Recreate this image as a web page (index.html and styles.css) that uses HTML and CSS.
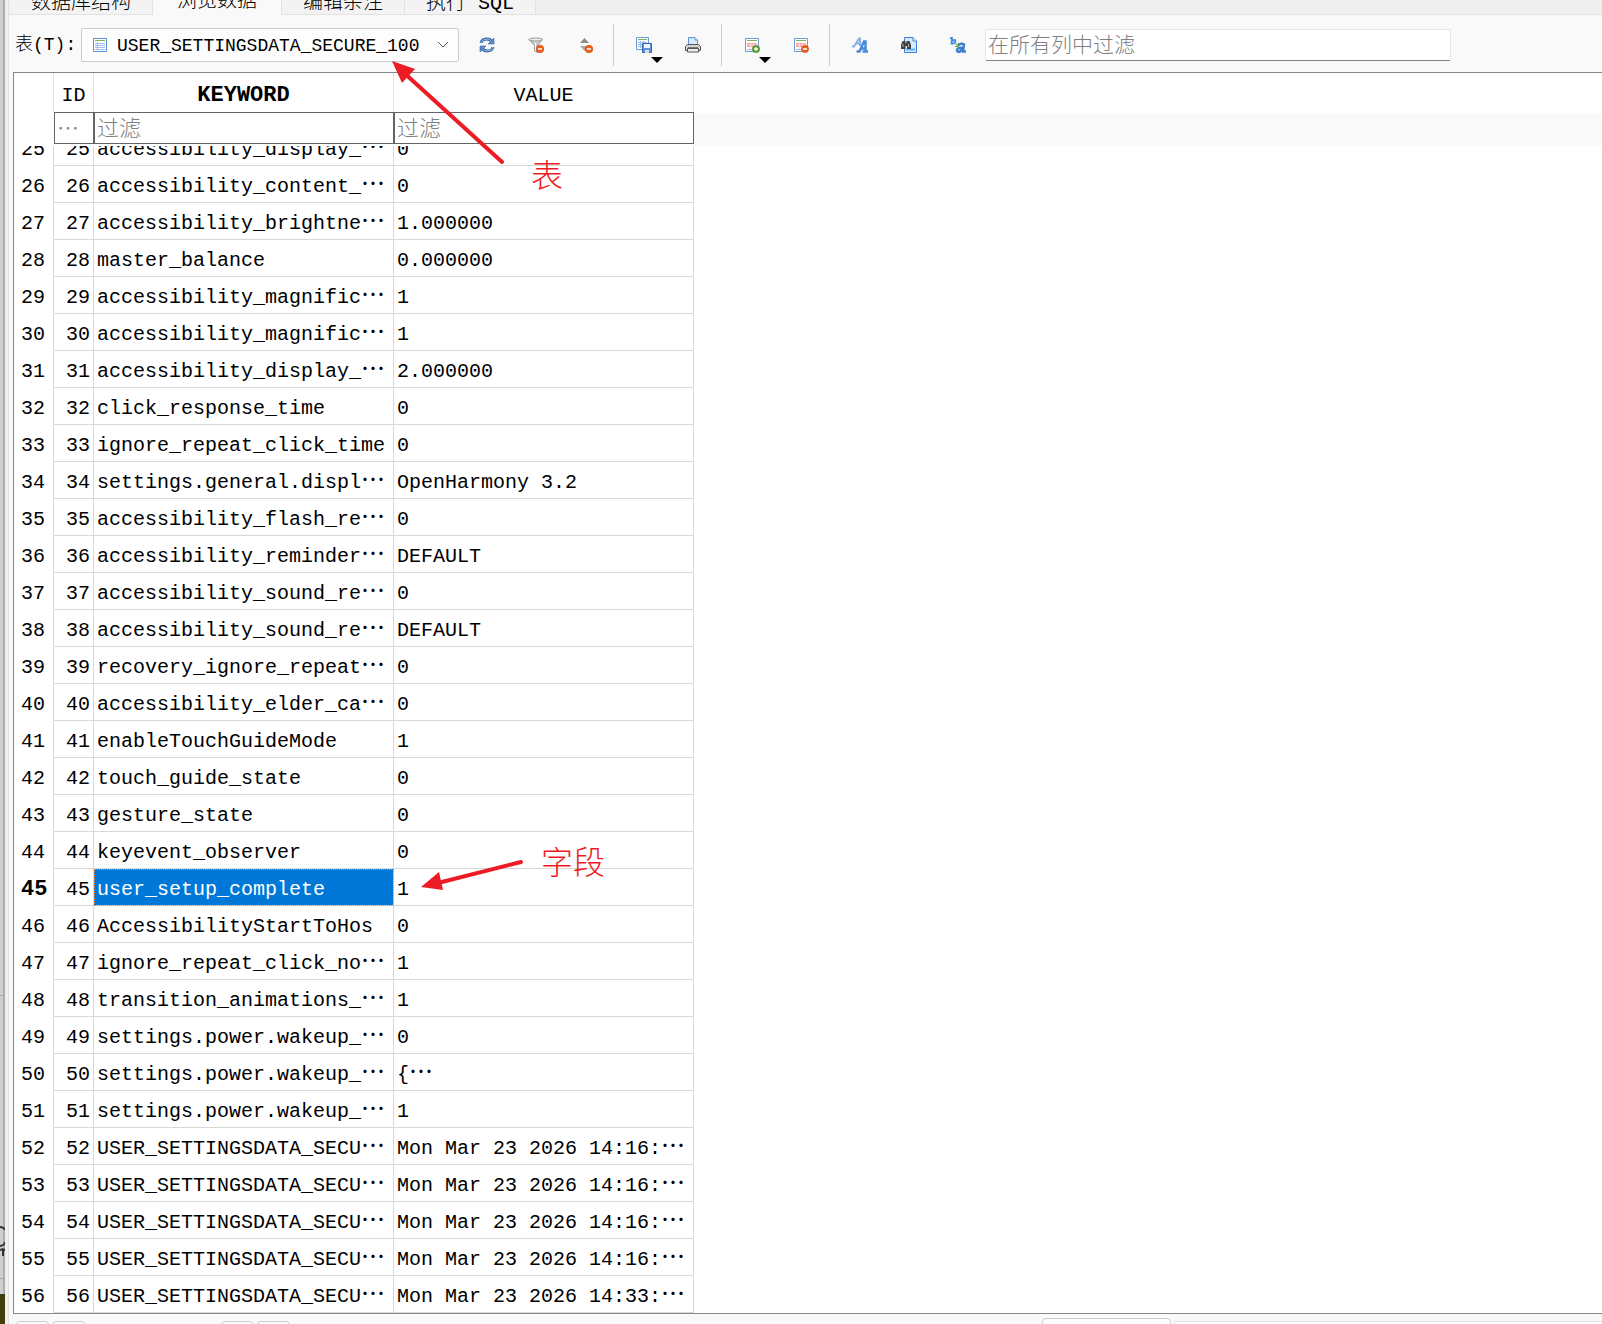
FILE: index.html
```html
<!doctype html>
<html lang="zh-CN">
  <head>
    <meta charset="utf-8">
    <meta name="viewport" content="width=device-width, initial-scale=1">
    <title>浏览数据</title>
    <link rel="stylesheet" href="styles.css">
  </head>
  <body>
    <div class="backdrop">
      <div class="backdrop-top"></div>
      <div class="backdrop-mid">
        <svg width="5" height="32" viewBox="0 0 5 32"><path d="M0 1Q4 1 5 4M0 20Q4 20 5 16M0 24Q4 22 5 25M3 24V30" fill="none" stroke="#333" stroke-width="2"/></svg>
      </div>
      <div class="backdrop-low"></div>
      <div class="backdrop-end"></div>
    </div>
    <main class="window">
      <nav class="tabs">
        <button type="button" class="tab">数据库结构</button>
        <button type="button" class="tab active">浏览数据</button>
        <button type="button" class="tab">编辑杂注</button>
        <button type="button" class="tab">执行 SQL</button>
      </nav>
      <div class="toolbar">
        <label class="table-label" for="table">表(T):</label>
        <div class="combo">
          <svg class="combo-icon" width="16" height="16" viewBox="0 0 16 16"><path d="M1.500 1.500h13v13h-13z" fill="#fff" stroke="#5b8fd6"/><path d="M3 3.500h10" stroke="#7fb558"/><path d="M3 6.500h10M3 8.500h10M3 10.500h10M3 12.500h10M5.500 5v8" stroke="#9bbcec"/></svg>
          <select id="table" class="combo-select">
            <option>USER_SETTINGSDATA_SECURE_100</option>
          </select>
          <svg class="combo-arrow" width="12" height="8" viewBox="0 0 12 8"><path d="M1 1l5 5 5-5" fill="none" stroke="#555"/></svg>
        </div>
        <button type="button" class="tool" aria-label="刷新">
          <svg width="16" height="16" viewBox="0 0 16 16"><path d="M2 6Q3 2 8 2q3 0 4.500 2.500" fill="none" stroke="#3465a4" stroke-width="3"/><path d="M2 6Q3 2 8 2q3 0 4.500 2.500" fill="none" stroke="#9fc0ea"/><path d="M15 1v6H9z" fill="#5d8ccb" stroke="#3465a4" stroke-width=".6"/><path d="M14 10q-1 4-6 4-3 0-4.500-2.500" fill="none" stroke="#3465a4" stroke-width="3"/><path d="M14 10q-1 4-6 4-3 0-4.500-2.500" fill="none" stroke="#9fc0ea"/><path d="M1 15V9h6z" fill="#5d8ccb" stroke="#3465a4" stroke-width=".6"/></svg>
        </button>
        <button type="button" class="tool" aria-label="清除筛选">
          <svg width="16" height="16" viewBox="0 0 16 16"><path d="M1 2.500l5.500 6V14l3 1.500v-7l5-6z" fill="#ccc" stroke="#999"/><ellipse cx="7.700" cy="2.500" rx="6.800" ry="1.500" fill="#eee" stroke="#999"/><path d="M7.500 6v8" stroke="#fff"/><circle cx="12" cy="12" r="3.800" fill="#e8601c" stroke="#c64600" stroke-width=".6"/><path d="M10 12h4" stroke="#fff" stroke-width="1.500"/></svg>
        </button>
        <button type="button" class="tool" aria-label="清除排序">
          <svg width="16" height="16" viewBox="0 0 16 16"><path d="M3 6l4.500-5L12 6z" fill="#8d8d86"/><path d="M3 9h9l-4.500 5z" fill="#aaa"/><circle cx="12" cy="12" r="3.800" fill="#e8601c" stroke="#c64600" stroke-width=".6"/><path d="M10 12h4" stroke="#fff" stroke-width="1.500"/></svg>
        </button>
        <span class="separator"></span>
        <button type="button" class="tool" aria-label="保存">
          <svg width="16" height="16" viewBox="0 0 16 16"><path d="M.5.500h12v12H.5z" fill="#f7faff" stroke="#6f9bd6"/><path d="M2 2.500h9" stroke="#7fb558"/><path d="M2 5.500h9M2 7.500h6M2 9.500h5M4.500 4v7M7.500 4v4" stroke="#9bbcec"/><path d="M6.500 6.500h9v9h-9z" fill="#5b94de" stroke="#2f66ad"/><path d="M8 7h6v4H8z" fill="#f4f8fd"/><path d="M9 13h4v3H9z" fill="#ddd"/></svg>
          <span class="drop"></span>
        </button>
        <button type="button" class="tool" aria-label="打印">
          <svg width="16" height="16" viewBox="0 0 16 16"><path d="M3.500 9V.5H10L12.500 3v6z" fill="#dbeafb" stroke="#5b94de"/><path d="M10 .5V3h2.500" fill="#fff" stroke="#5b94de"/><path d="M2.500 7.500h11l2 2v4h-15v-4z" fill="#d3d3d3" stroke="#555"/><path d="M3 10.500h10" stroke="#777"/><path d="M2.500 11.500h11v3.500h-11z" fill="#eee" stroke="#555"/></svg>
        </button>
        <span class="separator"></span>
        <button type="button" class="tool" aria-label="新建记录">
          <svg width="16" height="16" viewBox="0 0 16 16"><path d="M1.500 1.500h13v13h-13z" fill="#fff" stroke="#6f9bd6"/><path d="M3 3.500h10" stroke="#7fb558"/><path d="M3 6h10v4H3z" fill="#f79a9a"/><path d="M3 8h10M6.500 5v8M10 5v8" stroke="#fde0e0"/><path d="M3 12.500h8" stroke="#9bbcec"/><circle cx="12" cy="12" r="3.600" fill="#5aa02c" stroke="#3b7a1a" stroke-width=".6"/><path d="M10 12h4M12 10v4" stroke="#fff" stroke-width="1.300"/></svg>
          <span class="drop"></span>
        </button>
        <button type="button" class="tool" aria-label="删除记录">
          <svg width="16" height="16" viewBox="0 0 16 16"><path d="M1.500 1.500h13v13h-13z" fill="#fff" stroke="#6f9bd6"/><path d="M3 3.500h10" stroke="#7fb558"/><path d="M3 6h10v4H3z" fill="#f79a9a"/><path d="M3 8h10M6.500 5v8M10 5v8" stroke="#fde0e0"/><path d="M3 12.500h8" stroke="#9bbcec"/><circle cx="12" cy="12" r="3.600" fill="#e8601c" stroke="#c64600" stroke-width=".6"/><path d="M10 12h4" stroke="#fff" stroke-width="1.500"/></svg>
        </button>
        <span class="separator"></span>
        <button type="button" class="tool" aria-label="字体">
          <svg width="16" height="16" viewBox="0 0 16 16"><path d="M0 9.500h2L7 1.500h1V9M3.500 6.500H8" fill="none" stroke="#87b1e6" stroke-width="2"/><path d="M4.500 14.500h3L12 4.500h1.500v10M10.500 14.500H16M8.500 11.500h5" fill="none" stroke="#4a88d8" stroke-width="2.500"/></svg>
        </button>
        <button type="button" class="tool" aria-label="查找">
          <svg width="16" height="16" viewBox="0 0 16 16"><path d="M3.500.500H12L15.500 4v11.500h-12z" fill="#d6e8fc" stroke="#3f7fd0"/><path d="M12 .5V4h3.500" fill="#fff" stroke="#3f7fd0"/><path d="M5 12.500h9" stroke="#62b3f5" stroke-width="2"/><path d="M1.500 4h3v2h1V4h3l1.500 4v4H6V9H4.500v3H0V8z" fill="#444"/><path d="M2 7v3M7.500 7v3" stroke="#aaa"/></svg>
        </button>
        <button type="button" class="tool" aria-label="替换">
          <svg width="16" height="16" viewBox="0 0 16 16"><path d="M0 1h2L1.500 6.500h2Q5.500 6 5.500 4T2 4" fill="none" stroke="#4a8bdb" stroke-width="1.800"/><path d="M5.500 6.500l3 3M8.500 6v3.500H5" fill="none" stroke="#6fb03c" stroke-width="1.200"/><path d="M8.500 8q3-2 5.500-.5L13 14.500h3M13 11q-5-1-6 2 0 2.500 3 1.500l3-3" fill="none" stroke="#3f7fd0" stroke-width="2.500"/></svg>
        </button>
        <input type="text" class="filter-all" aria-label="在所有列中过滤" placeholder="在所有列中过滤">
      </div>

      <section class="sheet">
        <div class="sheet-head">
          <table class="grid">
            <colgroup><col class="col-row"><col class="col-id"><col class="col-text"><col class="col-text"></colgroup>
            <thead>
              <tr class="names"><td></td><th scope="col">ID</th><th scope="col" class="current">KEYWORD</th><th scope="col">VALUE</th></tr>
              <tr class="filters">
                <td></td>
                <td><input type="text" aria-label="过滤 ID" placeholder="⋯"></td>
                <td><input type="text" aria-label="过滤 KEYWORD" placeholder="过滤"></td>
                <td><input type="text" aria-label="过滤 VALUE" placeholder="过滤"></td>
              </tr>
            </thead>
          </table>
        </div>
        <div class="sheet-body">
          <table class="grid rows">
            <colgroup><col class="col-row"><col class="col-id"><col class="col-text"><col class="col-text"></colgroup>
            <tbody>
              <tr><th scope="row">25</th><td>25</td><td>accessibility_display_<b>⋯</b></td><td>0</td></tr>
              <tr><th scope="row">26</th><td>26</td><td>accessibility_content_<b>⋯</b></td><td>0</td></tr>
              <tr><th scope="row">27</th><td>27</td><td>accessibility_brightne<b>⋯</b></td><td>1.000000</td></tr>
              <tr><th scope="row">28</th><td>28</td><td>master_balance</td><td>0.000000</td></tr>
              <tr><th scope="row">29</th><td>29</td><td>accessibility_magnific<b>⋯</b></td><td>1</td></tr>
              <tr><th scope="row">30</th><td>30</td><td>accessibility_magnific<b>⋯</b></td><td>1</td></tr>
              <tr><th scope="row">31</th><td>31</td><td>accessibility_display_<b>⋯</b></td><td>2.000000</td></tr>
              <tr><th scope="row">32</th><td>32</td><td>click_response_time</td><td>0</td></tr>
              <tr><th scope="row">33</th><td>33</td><td>ignore_repeat_click_time</td><td>0</td></tr>
              <tr><th scope="row">34</th><td>34</td><td>settings.general.displ<b>⋯</b></td><td>OpenHarmony 3.2</td></tr>
              <tr><th scope="row">35</th><td>35</td><td>accessibility_flash_re<b>⋯</b></td><td>0</td></tr>
              <tr><th scope="row">36</th><td>36</td><td>accessibility_reminder<b>⋯</b></td><td>DEFAULT</td></tr>
              <tr><th scope="row">37</th><td>37</td><td>accessibility_sound_re<b>⋯</b></td><td>0</td></tr>
              <tr><th scope="row">38</th><td>38</td><td>accessibility_sound_re<b>⋯</b></td><td>DEFAULT</td></tr>
              <tr><th scope="row">39</th><td>39</td><td>recovery_ignore_repeat<b>⋯</b></td><td>0</td></tr>
              <tr><th scope="row">40</th><td>40</td><td>accessibility_elder_ca<b>⋯</b></td><td>0</td></tr>
              <tr><th scope="row">41</th><td>41</td><td>enableTouchGuideMode</td><td>1</td></tr>
              <tr><th scope="row">42</th><td>42</td><td>touch_guide_state</td><td>0</td></tr>
              <tr><th scope="row">43</th><td>43</td><td>gesture_state</td><td>0</td></tr>
              <tr><th scope="row">44</th><td>44</td><td>keyevent_observer</td><td>0</td></tr>
              <tr><th scope="row" class="current">45</th><td>45</td><td class="selected">user_setup_complete</td><td>1</td></tr>
              <tr><th scope="row">46</th><td>46</td><td>AccessibilityStartToHos</td><td>0</td></tr>
              <tr><th scope="row">47</th><td>47</td><td>ignore_repeat_click_no<b>⋯</b></td><td>1</td></tr>
              <tr><th scope="row">48</th><td>48</td><td>transition_animations_<b>⋯</b></td><td>1</td></tr>
              <tr><th scope="row">49</th><td>49</td><td>settings.power.wakeup_<b>⋯</b></td><td>0</td></tr>
              <tr><th scope="row">50</th><td>50</td><td>settings.power.wakeup_<b>⋯</b></td><td>{<b>⋯</b></td></tr>
              <tr><th scope="row">51</th><td>51</td><td>settings.power.wakeup_<b>⋯</b></td><td>1</td></tr>
              <tr><th scope="row">52</th><td>52</td><td>USER_SETTINGSDATA_SECU<b>⋯</b></td><td>Mon Mar 23 2026 14:16:<b>⋯</b></td></tr>
              <tr><th scope="row">53</th><td>53</td><td>USER_SETTINGSDATA_SECU<b>⋯</b></td><td>Mon Mar 23 2026 14:16:<b>⋯</b></td></tr>
              <tr><th scope="row">54</th><td>54</td><td>USER_SETTINGSDATA_SECU<b>⋯</b></td><td>Mon Mar 23 2026 14:16:<b>⋯</b></td></tr>
              <tr><th scope="row">55</th><td>55</td><td>USER_SETTINGSDATA_SECU<b>⋯</b></td><td>Mon Mar 23 2026 14:16:<b>⋯</b></td></tr>
              <tr><th scope="row">56</th><td>56</td><td>USER_SETTINGSDATA_SECU<b>⋯</b></td><td>Mon Mar 23 2026 14:33:<b>⋯</b></td></tr>
            </tbody>
          </table>
        </div>
      </section>

      <footer class="pager">
        <div class="pager-group">
          <button type="button" class="pager-btn" aria-label="第一页"></button>
          <button type="button" class="pager-btn" aria-label="上一页"></button>
        </div>
        <div class="pager-group pager-next">
          <button type="button" class="pager-btn" aria-label="下一页"></button>
          <button type="button" class="pager-btn" aria-label="最后一页"></button>
        </div>
        <button type="button" class="goto-btn" aria-label="转到"></button>
        <input type="text" class="goto" aria-label="转到">
      </footer>
    </main>

    <!-- red notes drawn over the sheet -->
    <svg class="arrows" width="640" height="900" viewBox="0 0 640 900">
      <path d="M502 162L402 71M521 862L434 884" stroke="#ed1c24" stroke-width="4" stroke-linecap="round"/>
      <path d="M392 61L415 69 402 83zM421 887L439 872 443 890z" fill="#ed1c24"/>
    </svg>
    <span class="note note-table">表</span>
    <span class="note note-field">字段</span>
  </body>
</html>
```

FILE: styles.css
```css
* {
    box-sizing: border-box;
}
body {
    position: relative;
    display: flex;
    height: 100vh;
    margin: 0;
    overflow: hidden;
    background-color: #f0f0f0;
    color: #000;
    font-family: "Liberation Mono", "Noto Sans CJK SC", monospace;
    font-size: 20px;
    font-weight: 300;
}
button, input, select {
    margin: 0;
    padding: 0;
    border: 0;
    border-radius: 0;
    color: inherit;
    font: inherit;
}
svg {
    display: block;
}
::placeholder {
    color: #808080;
    opacity: 1;
}

/* strip of the window behind */
.backdrop {
    display: flex;
    flex-direction: column;
    width: 5px;
    background: linear-gradient(to right, #cfcfcf 3px, #adadad 3px);
}
.backdrop-top {
    flex: 1;
    border-bottom: 1px solid #aaa;
}
.backdrop-mid {
    height: 283px;
    padding-top: 230px;
    border-bottom: 1px solid #aaa;
}
.backdrop-low {
    height: 15px;
}
.backdrop-end {
    height: 30px;
    background-color: #443d0c;
}

.window {
    display: flex;
    flex: 1;
    flex-direction: column;
    min-width: 0;
    margin-left: 3px;
    border-left: 1px solid #e2e2e2;
    background-color: #f9f9f9;
}

.tabs {
    display: flex;
    align-items: flex-end;
    height: 15px;
    padding-left: 1px;
    border-bottom: 1px solid #e2e2e2;
    background-color: #efefef;
}
.tab {
    height: 20px;
    padding: 0 21px;
    border-right: 1px solid #e2e2e2;
    background-color: #f3f3f3;
    line-height: 20px;
}
.tab.active {
    height: 23px;
    margin-bottom: -1px;
    padding: 0 24px 3px;
    background-color: #f9f9f9;
}

.toolbar {
    display: flex;
    align-items: center;
    height: 57px;
    padding: 2px 151px 0 6px;
}
.table-label {
    width: 66px;
    font-size: 18px;
    line-height: 24px;
    white-space: nowrap;
}
.combo {
    position: relative;
    width: 378px;
    margin-right: 3px;
}
.combo-select {
    width: 100%;
    height: 34px;
    padding: 2px 32px 0 35px;
    appearance: none;
    border: 1px solid #ccc;
    border-radius: 2px;
    background-color: #fdfdfd;
    font-size: 18px;
}
.combo-icon {
    position: absolute;
    top: 9px;
    left: 11px;
}
.combo-arrow {
    position: absolute;
    top: 13px;
    right: 10px;
}
.tool {
    position: relative;
    display: flex;
    align-items: center;
    justify-content: center;
    width: 49px;
    height: 42px;
    background: none;
}
.drop {
    position: absolute;
    right: 5px;
    bottom: 3px;
    border: 6px solid transparent;
    border-top-color: #000;
    border-bottom: 0;
}
.separator {
    width: 1px;
    height: 42px;
    margin: 0 5px 0 4px;
    background-color: #ccc;
}
.filter-all {
    flex: 1;
    min-width: 0;
    height: 32px;
    margin-left: 3px;
    padding: 4px 2px 0;
    border: 1px solid #e6e6e6;
    border-bottom-color: #868686;
    border-radius: 2px;
    background-color: #fff;
    font-size: 21px;
}

.sheet {
    display: flex;
    flex: 1;
    flex-direction: column;
    min-height: 0;
    margin-left: 4px;
    border: 1px solid #828790;
    border-right: 0;
    background-color: #fff;
}
.sheet-head {
    height: 73px;
    background: linear-gradient(#fff 41px, #f9f9f9 41px);
}
/* scrolled to the last row */
.sheet-body {
    display: flex;
    flex: 1;
    flex-direction: column;
    justify-content: flex-end;
    min-height: 0;
    overflow: hidden;
}
.grid {
    flex: none;
    width: 680px;
    table-layout: fixed;
    border-collapse: separate;
    border-spacing: 0;
    background-color: #fff;
}
.col-row, .col-id {
    width: 40px;
}
.col-text {
    width: 300px;
}
.grid th, .grid td {
    padding: 0;
    font-weight: 300;
}
.names th, .names td {
    height: 39px;
    border-right: 1px solid #e2e2e2;
    line-height: 33px;
}
.names th {
    padding-top: 6px;
}
.grid .current {
    font-size: 22px;
    font-weight: 700;
}
.filters td {
    height: 34px;
    padding-bottom: 2px;
}
.filters input {
    display: block;
    width: 100%;
    height: 32px;
    padding: 4px 2px 0;
    border: 1px solid #646464;
    background-color: #fff;
    font-size: 22px;
}
.rows th, .rows td {
    height: 37px;
    padding: 6px 3px 0;
    overflow: hidden;
    border-right: 1px solid #d8d8d8;
    border-bottom: 1px solid #d8d8d8;
    line-height: 30px;
    text-align: left;
    white-space: nowrap;
}
.rows th {
    padding-left: 7px;
    border-bottom-color: #fff;
}
.rows td:nth-child(2) {
    text-align: right;
}
.rows b {
    font-size: 24px;
    line-height: 20px;
}
.rows .selected {
    background-color: #0078d7;
    color: #fff;
    outline: 1px dotted #ff8728;
    outline-offset: -1px;
}

.pager {
    display: flex;
    align-items: flex-start;
    height: 10px;
    padding: 4px 0 0 7px;
    overflow: hidden;
}
.pager-group {
    display: flex;
    gap: 3px;
    margin: 3px 136px 0 0;
}
.pager-next {
    margin-right: auto;
}
.pager-btn, .goto-btn {
    width: 33px;
    height: 32px;
    border: 1px solid #ccc;
    border-radius: 4px;
    background-color: #fdfdfd;
}
.goto-btn {
    width: 129px;
}
.goto {
    width: 27%;
    height: 32px;
    margin: 3px 0 0 3px;
    border: 1px solid #e2e2e2;
    border-right: 0;
    background-color: #fff;
}

.arrows {
    position: absolute;
    top: 0;
    left: 0;
    pointer-events: none;
}
.note {
    position: absolute;
    color: #ed1c24;
    font-size: 32px;
    line-height: 32px;
}
.note-table {
    top: 163px;
    left: 531px;
}
.note-field {
    top: 850px;
    left: 541px;
}
```
